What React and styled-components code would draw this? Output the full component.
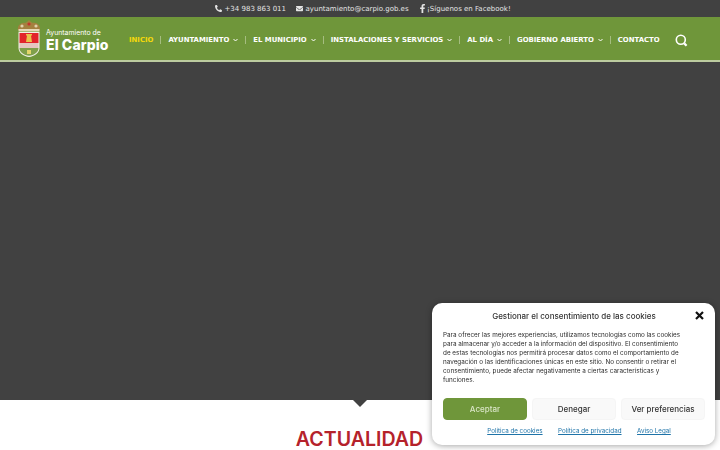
import React from "react";
import styled, { createGlobalStyle } from "styled-components";
import { FaPhoneAlt, FaEnvelope, FaFacebookF } from "react-icons/fa";

const Global = createGlobalStyle`
  html, body { margin: 0; padding: 0; height: 450px; overflow: hidden; background: #fff; }
  * { box-sizing: border-box; }
`;

const Page = styled.div`
  width: 720px;
  height: 450px;
  overflow: hidden;
  font-family: "DejaVu Sans", sans-serif;
`;

const TopBar = styled.div`
  height: 17px;
  background: #414141;
  color: #e4e4e4;
  font-size: 7px;
  display: flex;
  align-items: center;
  padding-left: 215px;
  gap: 9.5px;
`;

const TopItem = styled.span`
  display: flex;
  align-items: center;
  gap: ${(p) => p.$gap}px;
  white-space: nowrap;
  svg { font-size: ${(p) => p.$icon || 7}px; }
`;

const Header = styled.header`
  height: 45px;
  background: #6f963a;
  border-bottom: 2px solid #bccb9f;
  display: flex;
  align-items: center;
  padding-left: 17px;
`;

const Logo = styled.div`
  display: flex;
  align-items: center;
  gap: 5px;
  flex: 0 0 112px;
  color: #fff;
  white-space: nowrap;
`;

const LogoText = styled.div`
  font-family: Inter, sans-serif;
  margin-top: 4px;
`;

const LogoSmall = styled.div`
  font-size: 6.9px;
  line-height: 8px;
  font-weight: 400;
  margin-bottom: 1px;
`;

const LogoBig = styled.div`
  font-size: 14px;
  line-height: 14px;
  font-weight: 800;
  letter-spacing: 0.1px;
`;

const Nav = styled.nav`
  display: flex;
  align-items: center;
  font-size: 6.9px;
  font-weight: 700;
  color: #fff;
  margin-top: 3px;
`;

const NavItem = styled.a`
  display: flex;
  align-items: center;
  gap: 4px;
  white-space: nowrap;
  color: ${(p) => (p.$active ? "#f5d90a" : "#fff")};
  padding-right: 7px;
  margin-right: 7px;
  border-right: ${(p) => (p.$last ? "none" : "1px solid #a5bd80")};
  height: 8px;
`;

const SearchBox = styled.div`
  margin-left: 1px;
  display: flex;
`;

const Hero = styled.div`
  height: 338px;
  background: #414141;
  position: relative;
  &::after {
    content: "";
    position: absolute;
    left: 353px;
    bottom: -7px;
    border-left: 7px solid transparent;
    border-right: 7px solid transparent;
    border-top: 7px solid #414141;
  }
`;

const Section = styled.section`
  padding-top: 27px;
  text-align: center;
  padding-right: 1px;
`;

const Title = styled.h2`
  margin: 0;
  font-family: Inter, sans-serif;
  font-size: 19.6px;
  font-weight: 600;
  line-height: 24px;
  color: #b5222b;
`;

const Modal = styled.div`
  position: fixed;
  left: 432px;
  top: 303px;
  width: 283px;
  height: 142px;
  background: #fff;
  border-radius: 10px;
  box-shadow: 0 1px 6px rgba(0, 0, 0, 0.35);
  padding: 0 10px 0 11px;
  font-family: Inter, sans-serif;
  color: #222;
`;

const ModalHead = styled.div`
  height: 26px;
  display: flex;
  align-items: center;
  justify-content: center;
  font-size: 8px;
  font-weight: 500;
  color: #333;
`;

const Close = styled.svg`
  position: absolute;
  right: 11px;
  top: 8px;
`;

const ModalText = styled.p`
  margin: 2px 0 0;
  font-size: 6.35px;
  line-height: 9px;
  color: #2c2c2c;
  height: 54px;
  white-space: nowrap;
`;

const Buttons = styled.div`
  display: grid;
  grid-template-columns: repeat(3, 84px);
  gap: 5px;
  margin-top: 13px;
`;

const Btn = styled.button`
  height: 22px;
  border: 1px solid ${(p) => (p.$primary ? "#6f963a" : "#f5f5f5")};
  border-radius: 4px;
  background: ${(p) => (p.$primary ? "#6f963a" : "#f9f9f9")};
  color: ${(p) => (p.$primary ? "#d9e5c6" : "#333")};
  font-family: Inter, sans-serif;
  font-size: 8px;
  font-weight: 500;
  padding: 0;
`;

const Links = styled.div`
  display: flex;
  justify-content: center;
  gap: 15.5px;
  margin-top: 7px;
  padding-left: 10px;
  font-size: 6.25px;
`;

const PolicyLink = styled.a`
  color: #1e73a8;
  text-decoration: underline;
`;

const Crest = () => (
  <svg width="24" height="37" viewBox="0 0 24 37">
    <path d="M1 10 C0 5 5 2 8 3 L10 2 L12 0 L14 2 L16 3 C19 2 24 5 23 10 Z" fill="#a5803f" />
    <circle cx="5" cy="6" r="1.6" fill="#e0d2ac" />
    <circle cx="12" cy="4" r="1.6" fill="#c3352b" />
    <circle cx="19" cy="6" r="1.6" fill="#e0d2ac" />
    <rect x="1.5" y="9" width="21" height="2.5" fill="#e6d9b8" />
    <path d="M1.5 12 H22.5 V28 C22.5 33 17 36.5 12 37 C7 36.5 1.5 33 1.5 28 Z" fill="#f1efe6" />
    <rect x="2.5" y="13" width="19" height="10" fill="#e2242b" />
    <path d="M9 22 L10 15.5 H9 V14 H15 V15.5 H14 L15 22 Z" fill="#e9c24a" />
    <rect x="2.5" y="23" width="19" height="5" fill="#e5c6c0" />
    <path d="M2.5 28 H21.5 C21.5 32.5 17 35 12 35.8 C7 35 2.5 32.5 2.5 28 Z" fill="#7fa04a" />
    <path d="M10 30 H14 V34 H10 Z" fill="#e3d66a" />
  </svg>
);

const Chevron = () => (
  <svg width="5" height="4" viewBox="0 0 5 4" fill="none" stroke="#fff" strokeWidth="1">
    <path d="M0.5 1 L2.5 3 L4.5 1" />
  </svg>
);

const navItems = [
  { label: "INICIO", active: true },
  { label: "AYUNTAMIENTO", arrow: true },
  { label: "EL MUNICIPIO", arrow: true },
  { label: "INSTALACIONES Y SERVICIOS", arrow: true },
  { label: "AL DÍA", arrow: true },
  { label: "GOBIERNO ABIERTO", arrow: true },
  { label: "CONTACTO", last: true },
];

const App = () => (
  <Page>
    <Global />
    <TopBar>
      <TopItem $gap={2.5}><FaPhoneAlt />+34 983 863 011</TopItem>
      <TopItem $gap={3}><FaEnvelope />ayuntamiento@carpio.gob.es</TopItem>
      <TopItem $gap={0} $icon={9}><FaFacebookF />¡Síguenos en Facebook!</TopItem>
    </TopBar>
    <Header>
      <Logo>
        <Crest />
        <LogoText>
          <LogoSmall>Ayuntamiento de</LogoSmall>
          <LogoBig>El Carpio</LogoBig>
        </LogoText>
      </Logo>
      <Nav>
        {navItems.map((n) => (
          <NavItem key={n.label} $active={n.active} $last={n.last}>
            {n.label}
            {n.arrow && <Chevron />}
          </NavItem>
        ))}
        <SearchBox>
          <svg width="13" height="13" viewBox="0 0 13 13" fill="none" stroke="#fff">
            <circle cx="5.8" cy="5.8" r="4.5" strokeWidth="1.6" />
            <path d="M9.2 9.4 L11.6 11.8" strokeWidth="2.2" />
          </svg>
        </SearchBox>
      </Nav>
    </Header>
    <Hero />
    <Section>
      <Title>ACTUALIDAD</Title>
    </Section>
    <Modal>
      <ModalHead>Gestionar el consentimiento de las cookies</ModalHead>
      <Close width="9" height="9" viewBox="0 0 9 9" stroke="#111" strokeWidth="2.2">
        <path d="M1 1 L8 8 M8 1 L1 8" />
      </Close>
      <ModalText>
        Para ofrecer las mejores experiencias, utilizamos tecnologías como las cookies<br />
        para almacenar y/o acceder a la información del dispositivo. El consentimiento<br />
        de estas tecnologías nos permitirá procesar datos como el comportamiento de<br />
        navegación o las identificaciones únicas en este sitio. No consentir o retirar el<br />
        consentimiento, puede afectar negativamente a ciertas características y<br />
        funciones.
      </ModalText>
      <Buttons>
        <Btn $primary>Aceptar</Btn>
        <Btn>Denegar</Btn>
        <Btn>Ver preferencias</Btn>
      </Buttons>
      <Links>
        <PolicyLink>Política de cookies</PolicyLink>
        <PolicyLink>Política de privacidad</PolicyLink>
        <PolicyLink>Aviso Legal</PolicyLink>
      </Links>
    </Modal>
  </Page>
);

export default App;
